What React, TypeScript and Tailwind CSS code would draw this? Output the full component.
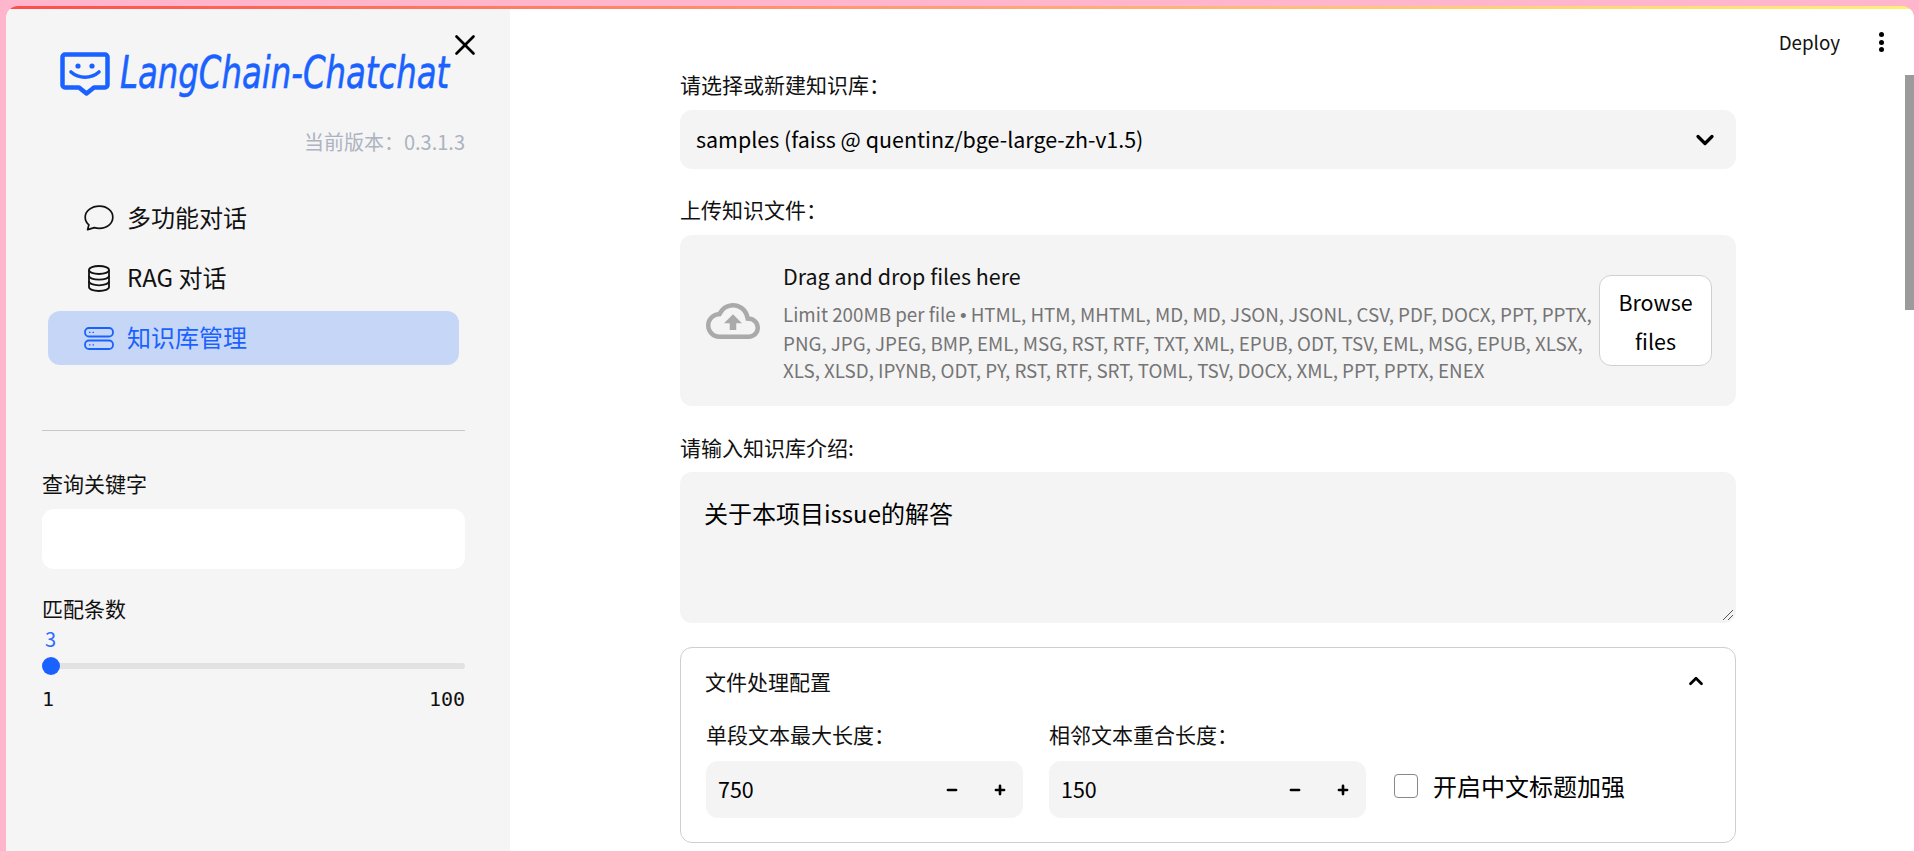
import React from "react";
import { ChevronDown, ChevronUp, Minus, Plus, X } from "lucide-react";

const cjk = "font-['Noto_Sans_CJK_SC','Noto_Sans',sans-serif]";

function Logo() {
    return (
        <div className="flex items-center gap-[10px]">
            <svg width="50" height="44" viewBox="0 0 50 44" fill="none" className="shrink-0">
                <path
                    d="M5 2.5h40a2.5 2.5 0 0 1 2.5 2.5v28a2.5 2.5 0 0 1-2.5 2.5H34l-7.5 6-7.5-6H5A2.5 2.5 0 0 1 2.5 33V5A2.5 2.5 0 0 1 5 2.5Z"
                    stroke="#1a62ff"
                    strokeWidth="4.5"
                    strokeLinejoin="round"
                />
                <circle cx="18" cy="14" r="2.6" fill="#1a62ff" />
                <circle cx="32" cy="14" r="2.6" fill="#1a62ff" />
                <path d="M11 20c8 7 20 7 28 0" stroke="#1a62ff" strokeWidth="3.6" strokeLinecap="round" />
            </svg>
            <span className="-mt-[3px] inline-block origin-left scale-x-[0.735] whitespace-nowrap font-['DejaVu_Sans',sans-serif] text-[44px] italic leading-none text-[#1a62ff] [-webkit-text-stroke:0.6px_#1a62ff]">
                LangChain-Chatchat
            </span>
        </div>
    );
}

function NavItem({ icon, label, active }: { icon: React.ReactNode; label: string; active?: boolean }) {
    return (
        <div
            className={`flex h-[54px] items-center gap-[13px] rounded-[12px] pl-[36px] text-[24px] ${
                active ? "bg-[#c6d6f7] text-[#1a62ff]" : "text-[#111]"
            }`}
        >
            <span className="flex w-[30px] justify-center">{icon}</span>
            <span className="pb-[2px]">{label}</span>
        </div>
    );
}

function Stepper({ label, value }: { label: string; value: string }) {
    return (
        <div className="w-[317px]">
            <div className="mb-[13px] text-[21px] leading-[28px] text-[#111]">{label}</div>
            <div className="flex h-[57px] items-center rounded-[12px] bg-[#f4f4f4] pl-[12px] pr-[16px]">
                <span className="flex-1 text-[21.45px]">{value}</span>
                <Minus size={14} strokeWidth={4.5} className="mr-[34px]" />
                <Plus size={14} strokeWidth={4.5} />
            </div>
        </div>
    );
}

export default function App() {
    return (
        <div className={`h-[851px] overflow-hidden bg-[#ffb6cc] pl-[6px] pr-[5px] pt-[6px] ${cjk}`}>
            <div className="h-full overflow-hidden rounded-t-[12px] bg-gradient-to-r from-[#ff4b4b] via-[#ffa07a] to-[#fff176] pt-[3px]">
                <div className="flex h-full bg-white">
                    <aside className="w-[504px] shrink-0 bg-[#f5f5f6] pl-[36px] pr-[45px]">
                        <div className="relative">
                            <div className="pl-[18px] pt-[43px]">
                                <Logo />
                            </div>
                            <X size={34} strokeWidth={1.9} className="absolute right-[-17px] top-[19px] text-black" />
                        </div>
                        <div className="mt-[33px] text-right text-[20px] leading-[26px] text-[#adb3c0]">当前版本：0.3.1.3</div>
                        <div className="mt-[36px] ml-[6px] flex w-[411px] flex-col gap-[6px]">
                            <NavItem
                                icon={
                                    <svg width="30" height="26" viewBox="0 0 30 26" fill="none" stroke="#111" strokeWidth="1.7" strokeLinejoin="round">
                                        <path d="M15.5 1.2C7.5 1.2 1.2 6.1 1.2 12.2c0 3 1.4 5.6 3.7 7.6L3.6 24.6l6.7-2c1.6.5 3.4.7 5.2.7 7.6 0 13.3-5 13.3-11.1S23.1 1.2 15.5 1.2Z" />
                                    </svg>
                                }
                                label="多功能对话"
                            />
                            <NavItem
                                icon={
                                    <svg width="22" height="27" viewBox="0 0 22 27" fill="none" stroke="#111" strokeWidth="1.8">
                                        <path d="M1 5c0-2.4 4.5-4 10-4s10 1.6 10 4-4.5 4-10 4S1 7.4 1 5Z" />
                                        <path d="M1 5v17c0 2.4 4.5 4 10 4s10-1.6 10-4V5" />
                                        <path d="M1 10.700c0 2.400 4.500 4 10 4s10-1.600 10-4M1 16.300c0 2.400 4.500 4 10 4s10-1.600 10-4" />
                                    </svg>
                                }
                                label="RAG 对话"
                            />
                            <NavItem
                                active
                                icon={
                                    <svg width="30" height="23" viewBox="0 0 30 23" fill="none" stroke="#1a62ff" strokeWidth="1.8">
                                        <rect x="1" y="1" width="28" height="8.500" rx="4" />
                                        <rect x="1" y="13.500" width="28" height="8.500" rx="4" />
                                        <path d="M5 5.300h1.500M8.500 5.300h1.500M5 17.800h1.500M8.500 17.800h1.500" strokeWidth="1.200" />
                                    </svg>
                                }
                                label="知识库管理"
                            />
                        </div>
                        <div className="mt-[65px] border-t border-[#c8c8c8]" />
                        <div className="mt-[38px] text-[21px] leading-[28px] text-[#111]">查询关键字</div>
                        <div className="mt-[12px] h-[60px] rounded-[12px] bg-white" />
                        <div className="mt-[25px] text-[21px] leading-[28px] text-[#111]">匹配条数</div>
                        <div className="mt-[4px] pl-[3px] text-[20px] leading-[26px] text-[#2f6dff]">3</div>
                        <div className="relative mt-[11px] h-[6px] rounded-full bg-[#e2e2e2]">
                            <div className="absolute left-0 top-[-6px] h-[18px] w-[18px] rounded-full bg-[#1a62ff]" />
                        </div>
                        <div className="mt-[17px] flex justify-between font-['DejaVu_Sans_Mono',monospace] text-[20px] leading-[26px] text-[#111]">
                            <span>1</span>
                            <span>100</span>
                        </div>
                    </aside>

                    <main className="relative min-w-0 flex-1">
                        <div className="absolute right-[30px] top-[19px] flex items-center text-[#111]">
                            <span className="text-[18.77px] leading-[28px]">Deploy</span>
                            <span className="ml-[39px] flex flex-col gap-[2.5px]">
                                <i className="h-[5px] w-[5px] rounded-full bg-black" />
                                <i className="h-[5px] w-[5px] rounded-full bg-black" />
                                <i className="h-[5px] w-[5px] rounded-full bg-black" />
                            </span>
                        </div>
                        {/* scrollbar */}
                        <div className="absolute right-0 top-[66px] h-[235px] w-[9px] bg-[#9b9b9b]" />

                        <div className="ml-[170px] w-[1056px] pt-[61px]">
                            <div className="text-[21px] leading-[28px] text-[#111]">请选择或新建知识库：</div>
                            <div className="mt-[12px] flex h-[59px] items-center justify-between rounded-[12px] bg-[#f4f4f4] pl-[16px] pr-[17px] text-[21.45px]">
                                <span>samples (faiss @ quentinz/bge-large-zh-v1.5)</span>
                                <ChevronDown size={28} strokeWidth={2.8} />
                            </div>

                            <div className="mt-[26px] text-[21px] leading-[28px] text-[#111]">上传知识文件：</div>
                            <div className="mt-[12px] flex h-[171px] items-center rounded-[12px] bg-[#f4f4f4] pl-[26px] pr-[24px]">
                                <svg width="54" height="54" viewBox="0 0 24 24" className="mr-[23px] shrink-0" fill="#aaaaaa">
                                    <path d="M19.35 10.04A7.49 7.49 0 0 0 12 4C9.11 4 6.6 5.64 5.35 8.04A5.994 5.994 0 0 0 0 14c0 3.31 2.69 6 6 6h13c2.76 0 5-2.24 5-5 0-2.64-2.05-4.78-4.65-4.96ZM19 18H6c-2.21 0-4-1.79-4-4 0-2.05 1.53-3.76 3.56-3.97l1.07-.11.5-.95A5.469 5.469 0 0 1 12 6c2.62 0 4.88 1.86 5.39 4.43l.3 1.5 1.53.11A2.98 2.98 0 0 1 22 15c0 1.65-1.35 3-3 3ZM8 13h2.55v3h2.9v-3H16l-4-4-4 4Z" />
                                </svg>
                                <div className="min-w-0 flex-1 pt-[4px]">
                                    <div className="text-[21.45px] leading-[28px] text-[#111]">Drag and drop files here</div>
                                    <div className="mt-[10px] whitespace-nowrap text-[18.77px] leading-[27px] text-[#757575]">
                                        Limit 200MB per file <span className="font-['Liberation_Sans',sans-serif]">•</span> HTML, HTM, MHTML, MD, MD, JSON, JSONL, CSV, PDF, DOCX, PPT, PPTX,
                                        <br />
                                        PNG, JPG, JPEG, BMP, EML, MSG, RST, RTF, TXT, XML, EPUB, ODT, TSV, EML, MSG, EPUB, XLSX,
                                        <br />
                                        XLS, XLSD, IPYNB, ODT, PY, RST, RTF, SRT, TOML, TSV, DOCX, XML, PPT, PPTX, ENEX
                                    </div>
                                </div>
                                <div className="flex h-[91px] w-[113px] shrink-0 items-center justify-center rounded-[12px] border border-[#d0d0d0] bg-white text-center text-[21.45px] leading-[39px]">
                                    Browse
                                    <br />
                                    files
                                </div>
                            </div>

                            <div className="mt-[27px] text-[21px] leading-[28px] text-[#111]">请输入知识库介绍:</div>
                            <div className="relative mt-[11px] h-[151px] rounded-[12px] bg-[#f4f4f4] px-[24px] pt-[24px] text-[24px] leading-[34px]">
                                关于本项目issue的解答
                                <svg width="12" height="12" viewBox="0 0 12 12" className="absolute bottom-[2px] right-[2px]" stroke="#555" strokeWidth="1">
                                    <path d="M1 11 11 1M6 11l5-5" />
                                </svg>
                            </div>

                            <div className="mt-[24px] rounded-[12px] border border-[#cfcfcf] px-[24px]">
                                <div className="flex h-[70px] items-center justify-between">
                                    <span className="pb-[3px] text-[21px] text-[#111]">文件处理配置</span>
                                    <ChevronUp size={22} strokeWidth={3} className="mb-[5px] mr-[4px]" />
                                </div>
                                <div className="flex items-end pb-[24px] pl-[1px] pt-[2px]">
                                    <Stepper label="单段文本最大长度：" value="750" />
                                    <div className="w-[26px]" />
                                    <Stepper label="相邻文本重合长度：" value="150" />
                                    <div className="ml-[28px] flex h-[57px] items-center gap-[15px] pb-[8px] text-[24px]">
                                        <span className="h-[24px] w-[24px] rounded-[4px] border border-[#888] bg-white" />
                                        开启中文标题加强
                                    </div>
                                </div>
                            </div>
                        </div>
                    </main>
                </div>
            </div>
        </div>
    );
}
